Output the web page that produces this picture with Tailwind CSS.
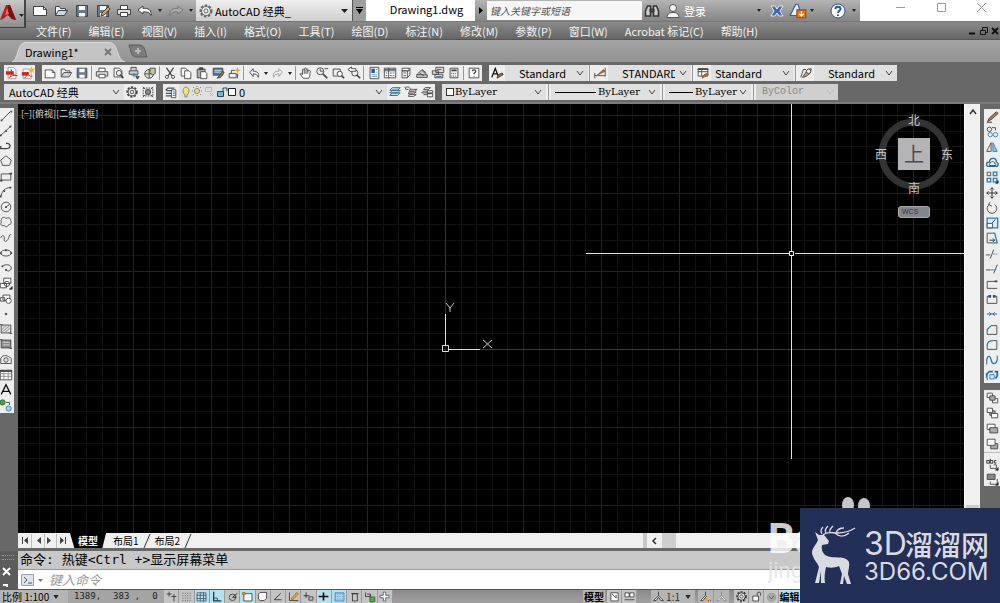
<!DOCTYPE html>
<html lang="zh-CN">
<head>
  <meta charset="UTF-8" />
  <meta name="viewport" content="width=device-width, initial-scale=1.0" />
  <title>Drawing1.dwg</title>
  <script src="https://cdn.jsdelivr.net/npm/@tailwindcss/browser@4"></script>
</head>
<body class="relative h-screen flex flex-col overflow-hidden bg-[#686868] font-['Noto_Sans_CJK_SC',sans-serif] text-[11px] leading-4 text-black">

  <!-- Title bar -->
  <header class="relative flex h-[22px] shrink-0 items-stretch bg-linear-to-b from-[#b4b4b4] to-[#858585] border-b border-[#777]">
    <button aria-label="应用程序" class="absolute left-0 top-0 z-10 flex h-7 w-[26px] items-center border-r-2 border-b border-[#444] bg-linear-to-b from-[#c8c8c8] to-[#8e8e8e]">
      <svg class="h-5 w-6" viewBox="0 0 24 20"><path d="M0 16L6 1h4l6 15-4-1-4-4-5 4z" fill="#b3201b"/><path d="M8 1h2l6 15-4-1-4-4z" fill="#7c100e"/><path d="M7 4l2 6-4 1z" fill="#e8695c"/><path d="M19 10h5l-2.500 3z" fill="#222"/></svg>
    </button>
    <div class="flex items-center pl-[29px] w-[196px] shrink-0 text-[#444]" data-tools="qnew qopen qsave qsaveas qprint qundo v qredo v" data-kind="quick"></div>
    <div class="flex w-[156px] shrink-0 items-center bg-linear-to-b from-[#efefef] to-[#cfcfcf] pl-[2px] pr-1">
      <svg class="size-4 shrink-0 text-[#666]" data-icon="gear"></svg>
      <select aria-label="工作空间" class="min-w-0 flex-1 appearance-none bg-transparent pl-px text-[11px] leading-5 outline-none"><option>AutoCAD 经典_</option></select>
      <svg class="h-1 w-[7px]" viewBox="0 0 7 4"><path d="M0 0h7L3.500 4z" fill="#222"/></svg>
    </div>
    <button aria-label="自定义" class="flex w-[14px] shrink-0 items-center justify-center border-l border-[#555] bg-[#9d9d9d]">
      <svg class="h-[7px] w-[7px]" viewBox="0 0 7 7"><path d="M0 0h7v1H0zM0 2h7L3.500 7z"/></svg>
    </button>
    <h1 class="flex h-[21px] w-[109px] shrink-0 justify-center bg-white pl-3 text-[11px] leading-[18px]">Drawing1.dwg</h1>
    <button aria-label="展开" class="flex w-3 shrink-0 items-center justify-center">
      <svg class="h-[7px] w-1" viewBox="0 0 4 7"><path d="M0 0v7l4-3.500z"/></svg>
    </button>
    <input aria-label="搜索" placeholder="键入关键字或短语" class="my-px w-[155px] shrink-0 bg-[#f6f6f6] pl-[3px] text-[10px] italic outline-none placeholder:text-[#555]" />
    <div class="flex flex-1 items-center pl-[2px]">
      <button aria-label="查找"><svg class="size-4 text-[#333]" data-icon="binoc"></svg></button>
      <button class="ml-[5px] flex items-center gap-[3px] text-white"><svg class="size-4 text-[#555]" data-icon="user"></svg>登录</button>
      <div class="ml-auto flex items-center pr-1">
        <svg class="mr-2 h-[3px] w-1" data-icon="tri"></svg>
        <button aria-label="Exchange"><svg class="size-4" data-icon="exch"></svg></button>
        <button aria-label="更新" class="ml-1"><svg class="size-[18px]" data-icon="a360"></svg></button>
        <svg class="ml-[3px] mr-4 h-[3px] w-1" data-icon="tri"></svg>
        <button aria-label="帮助"><svg class="size-4" data-icon="qhelp"></svg></button>
        <svg class="ml-[6px] h-[3px] w-1" data-icon="tri"></svg>
      </div>
    </div>
    <div class="flex h-[21px] w-[140px] shrink-0 items-start justify-between bg-white pl-9 pr-3 pt-[2px] text-[#999]">
      <button aria-label="最小化"><svg class="size-3" viewBox="0 0 12 12" stroke="currentColor"><path d="M0 5.500h9"/></svg></button>
      <button aria-label="最大化"><svg class="size-3" viewBox="0 0 12 12" fill="none" stroke="currentColor"><path d="M1.500 1.500h8v8h-8z"/></svg></button>
      <button aria-label="关闭"><svg class="size-3" viewBox="0 0 12 12" stroke="currentColor"><path d="M1 1l9 9M10 1l-9 9"/></svg></button>
    </div>
  </header>

  <!-- Menu bar -->
  <nav class="flex h-[18px] shrink-0 items-center gap-[17px] whitespace-nowrap border-b border-[#555] bg-linear-to-b from-[#8a8a8a] to-[#666] pl-9 text-[#f4f4f4]">
    <a href="#">文件(F)</a><a href="#">编辑(E)</a><a href="#">视图(V)</a><a href="#">插入(I)</a><a href="#">格式(O)</a><a href="#">工具(T)</a><a href="#">绘图(D)</a><a href="#">标注(N)</a><a href="#">修改(M)</a><a href="#">参数(P)</a><a href="#">窗口(W)</a><a href="#">Acrobat 标记(C)</a><a href="#">帮助(H)</a>
    <svg class="ml-auto h-3 w-8 shrink-0" viewBox="0 0 32 12" fill="none" stroke="#111"><path d="M1 8.500h6" stroke-width="2"/><path d="M12.500 5.500h5v4h-5zM14.500 5V2.500h5v5h-2"/><path d="M24 3l6 6M30 3l-6 6" stroke-width="2"/></svg>
  </nav>

  <!-- File tabs -->
  <div class="flex h-[22px] shrink-0 items-end bg-linear-to-b from-[#a3a3a3] to-[#939393] pl-3">
    <div class="relative flex h-5 w-[115px] items-center">
      <svg class="absolute inset-0 h-5 w-[115px]" viewBox="0 0 115 20"><path d="M0 20c6-1 5-19 13-19.500h85c8 0 7 18.500 15 19.500z" fill="#c4c4c4" stroke="#dadada"/></svg>
      <a href="#" class="relative pl-[13px]">Drawing1*</a>
      <button aria-label="关闭标签" class="relative ml-auto mr-[15px]"><svg class="size-2" viewBox="0 0 8 8" stroke="#777" stroke-width="2"><path d="M1 1l6 6M7 1L1 7"/></svg></button>
    </div>
    <button aria-label="新建标签" class="mb-1"><svg class="ml-px h-[14px] w-5" viewBox="0 0 20 14"><path d="M1 1h10c6 0 6 6 8 12H8C3 13 3 6 1 1z" fill="#7d7d7d" stroke="#5c5c5c"/><path d="M10 4v6M7 7h6" stroke="#bbb" stroke-width="2"/></svg></button>
  </div>

  <!-- Toolbars -->
  <div class="flex h-[42px] shrink-0 flex-col gap-[3px] border-b-2 border-[#7c7c7c] pl-1 pt-[3px] text-[#444]">
    <div class="flex h-4 shrink-0 gap-[7px]">
      <div class="flex w-[31px] bg-[#eee]" data-tools="pdf pdfstar"></div>
      <div class="flex bg-[#eee]" data-tools="new open save | print preview publish globe | cut copy paste match block | undo v redo v | pan zoomrt zoomwin zoomprev | props dcenter palettes sheet markup calc | help"></div>
      <div class="flex bg-[#eee]" data-combos="textstyle:Standard:14 dimstyle:STANDARD:14 tablestyle:Standard:4 leader:Standard:14"></div>
    </div>
    <div class="flex h-4 shrink-0 gap-[7px]">
      <div class="flex bg-[#eee]">
        <label class="flex w-[120px] items-center bg-[#e0e0e0] pr-1"><select aria-label="工作空间" class="min-w-0 flex-1 appearance-none pl-[5px] leading-4 text-black outline-none"><option>AutoCAD 经典</option></select><svg class="size-2" data-icon="chev"></svg></label>
        <div class="flex" data-tools="gear wsset"></div>
      </div>
      <div class="flex bg-[#eee]">
        <div class="flex" data-tools="layers"></div>
        <label class="flex w-[208px] items-center bg-[#e0e0e0] pr-1">
          <svg class="h-4 w-[58px] shrink-0" data-icon="layerstate"></svg>
          <select aria-label="图层" class="min-w-0 flex-1 appearance-none pl-[2px] leading-4 text-black outline-none"><option>0</option></select><svg class="size-2" data-icon="chev"></svg>
        </label>
        <div class="flex" data-tools="laycur layprev laystate"></div>
      </div>
      <div class="flex bg-[#eee] font-['DejaVu_Serif',serif] text-[10px]">
        <label class="flex w-[104px] items-center bg-[#e0e0e0] pl-1 pr-1"><span class="size-2 border border-[#333] bg-white"></span><select aria-label="颜色" class="min-w-0 flex-1 appearance-none pl-px leading-4 text-black outline-none"><option>ByLayer</option></select><svg class="size-2" data-icon="chev"></svg></label>
        <span class="mx-[2px] w-px bg-[#999]"></span>
        <label class="flex w-[109px] items-center bg-[#e0e0e0] pl-1 pr-1"><span class="h-px w-[41px] bg-black"></span><select aria-label="线型" class="min-w-0 flex-1 appearance-none pl-[2px] leading-4 text-black outline-none"><option>ByLayer</option></select><svg class="size-2" data-icon="chev"></svg></label>
        <span class="mx-[2px] w-px bg-[#999]"></span>
        <label class="flex w-[86px] items-center bg-[#e0e0e0] pl-1 pr-1"><span class="h-px w-6 bg-black"></span><select aria-label="线宽" class="min-w-0 flex-1 appearance-none pl-[2px] leading-4 text-black outline-none"><option>ByLayer</option></select><svg class="size-2" data-icon="chev"></svg></label>
        <span class="mx-[2px] w-px bg-[#999]"></span>
        <label class="flex w-[82px] items-center bg-[#cfcfcf] pr-1 font-['Liberation_Mono',monospace] text-[#888]"><select disabled aria-label="打印样式" class="min-w-0 flex-1 appearance-none pl-[6px] leading-4 outline-none"><option>ByColor</option></select><svg class="size-2 text-[#bbb]" data-icon="chev"></svg></label>
      </div>
    </div>
  </div>

  <!-- Workspace -->
  <main class="flex min-h-0 flex-1">
    <aside class="flex w-[14px] shrink-0 justify-end overflow-hidden pt-1 text-[#444]">
      <div class="flex h-[305px] w-4 shrink-0 flex-col bg-[#eee]" data-kind="side" data-tools="line xline pline polygon rect arc circle revcloud spline ellipse elarc insert mkblock point hatch gradient region table mtext addsel"></div>
    </aside>
    <div class="ml-1 flex min-w-0 flex-1 flex-col">
      <div class="flex min-h-0 flex-1">
        <!-- Model space -->
        <div class="relative min-w-0 flex-1 overflow-hidden bg-black">
          <svg class="absolute inset-0 h-full w-full">
            <defs>
              <pattern id="grid" width="78" height="78" x="427" y="245" patternUnits="userSpaceOnUse">
                <path d="M16.500 0v78M31.500 0v78M47.500 0v78M62.500 0v78M0 16.500h78M0 31.500h78M0 47.500h78M0 62.500h78" stroke="#101113"/>
                <path d="M.5 0v78M0 .5h78" stroke="#212427"/>
              </pattern>
            </defs>
            <rect width="100%" height="100%" fill="url(#grid)"/>
            <path d="M427.500 0v210" stroke="#1f4423"/>
            <path d="M462 245.500h2000" stroke="#6a2424"/>
            <path d="M427.500 210v32M431 245.500h31" stroke="#ddd"/>
            <path d="M424.500 241.500h6v6h-6z" fill="none" stroke="#ddd"/>
            <path d="M428 199l4 5 4-5M432 204v4M465 236l9 8M474 236l-9 8" fill="none" stroke="#ccc"/>
            <path d="M568 149.500h203M777 149.500h2000M773.500 0v147M773.500 152v203" stroke="#e4e4e4"/>
            <path d="M771.500 147.500h4v4h-4z" fill="none" stroke="#fff"/>
          </svg>
          <p class="relative pl-[3px] pt-[2px] text-[9px] leading-4 text-[#ddd]">[−][俯视][二维线框]</p>
          <!-- View cube -->
          <div class="absolute right-[10px] top-2 grid w-20 grid-cols-[14px_1fr_14px] items-center justify-items-center text-[12px] leading-4 text-[#c4c4c4]">
            <svg class="absolute left-1 top-[6px] size-[72px]" viewBox="0 0 72 72"><circle cx="36" cy="36" r="32" fill="none" stroke="#333" stroke-width="7"/></svg>
            <a href="#" class="relative col-span-3">北</a>
            <a href="#" class="relative">西</a>
            <a href="#" class="relative my-[10px] flex size-8 items-center justify-center bg-[#b4b4b6] text-[20px] leading-8 text-[#4b4b50]">上</a>
            <a href="#" class="relative">东</a>
            <a href="#" class="relative col-span-3">南</a>
            <button class="col-span-3 mt-[10px] flex h-3 w-8 items-center rounded-[3px] border border-[#aaa] bg-[#85858f] pl-[3px] font-['Liberation_Sans',sans-serif] text-[7px] leading-3 text-[#333]">WCS</button>
          </div>
          <svg class="absolute bottom-5 right-[93px] h-4 w-[31px]" viewBox="0 0 31 16" fill="#c6c6c6"><ellipse cx="8" cy="8" rx="6" ry="8"/><ellipse cx="24" cy="9" rx="6" ry="8"/></svg>
        </div>
        <div class="flex w-4 shrink-0 flex-col items-center justify-between border-l border-white bg-[#f0f0f0] pt-1">
          <svg class="size-2" viewBox="0 0 8 8" fill="none" stroke="#333" stroke-width="1.500"><path d="M1 6l3-4 3 4"/></svg>
          <span class="h-7 w-[13px] bg-[#cdcdcd]"></span>
        </div>
      </div>
      <!-- Layout tabs -->
      <div class="flex h-[15px] shrink-0 items-center bg-[#f0f0f0] text-[10px] leading-[14px]">
        <svg class="h-[14px] w-[52px] shrink-0" viewBox="0 0 52 14" fill="#444" stroke="#bbb"><path d="M13.500 0v14M26.500 0v14M38.500 0v14"/><g stroke="none"><path d="M4 3h1v7H4zM10 3v7L6 6.500zM23 3v7l-4-3.500zM29 3v7l4-3.500zM42 3v7l4-3.500zM47 3h1v7h-1z"/></g></svg>
        <a href="#" class="flex h-[15px] w-9 items-center justify-center bg-black font-bold text-white [clip-path:polygon(0_0,100%_0,90%_100%,12%_100%)]">模型</a>
        <a href="#" class="pl-[7px]">布局1</a>
        <svg class="mx-1 h-[14px] w-2" viewBox="0 0 8 14"><path d="M1 14L7 0" stroke="#333"/></svg>
        <a href="#">布局2</a>
        <svg class="mx-1 h-[14px] w-2" viewBox="0 0 8 14"><path d="M1 14L7 0" stroke="#333"/></svg>
        <div class="ml-auto flex h-full w-[337px] items-center border-l-4 border-[#c8c8c8]">
          <svg class="ml-1 size-2" viewBox="0 0 8 8" fill="none" stroke="#333" stroke-width="1.500"><path d="M5 1L2 4l3 3"/></svg>
          <span class="ml-[3px] h-full w-[14px] bg-[#cdcdcd]"></span>
        </div>
      </div>
    </div>
    <aside class="ml-1 w-4 shrink-0 overflow-hidden pt-[5px] text-[#444]">
      <div class="flex h-[274px] flex-col bg-[#eee]" data-kind="side" data-tools="erase mcopy mirror offset array move rotate scale stretch trim extend breakpt break join chamfer fillet blend explode"></div>
      <div class="mt-[7px] flex h-[62px] flex-col bg-[#eee]" data-kind="side" data-tools="front back above under"></div>
      <div class="flex h-[34px] flex-col border-t border-[#bbb] bg-[#eee] pt-[3px]" data-kind="side" data-tools="txtfront hatchback"></div>
    </aside>
  </main>

  <!-- Command line -->
  <section class="mt-[3px] flex h-[38px] shrink-0">
    <div class="flex w-[18px] shrink-0 flex-col items-start justify-between bg-[#5c5c5c] pb-[2px] pl-[2px] pt-1">
      <span class="h-[5px] w-3 border-y border-dotted border-[#999]"></span>
      <button aria-label="关闭命令行"><svg class="size-[9px]" viewBox="0 0 9 9" stroke="#fff" stroke-width="2"><path d="M1 1l7 7M8 1L1 8"/></svg></button>
      <svg class="h-1 w-2" viewBox="0 0 8 4" stroke="#fff" fill="none" stroke-width="2"><path d="M1 2h4v3"/></svg>
    </div>
    <div class="flex min-w-0 flex-1 flex-col bg-white">
      <p class="h-[19px] border-b border-[#999] bg-[#c8c8c8] pl-[2px] font-['DejaVu_Sans_Mono','Noto_Sans_CJK_SC',monospace] text-[13px] leading-[17px]">命令: 热键&lt;Ctrl +&gt;显示屏幕菜单</p>
      <label class="flex flex-1 items-center pl-[3px]">
        <svg class="h-3 w-[22px]" viewBox="0 0 22 12"><path d="M.5.5h12v11H.5z" fill="#dde3ea" stroke="#9aa4b0"/><path d="M3 3l3 3-3 3M7 9h4" fill="none" stroke="#456"/><path d="M17 5h5l-2.500 3z" fill="#777"/></svg>
        <input aria-label="命令" placeholder="键入命令" class="min-w-0 flex-1 pl-[6px] text-[13px] italic leading-4 outline-none placeholder:text-[#999]" />
      </label>
    </div>
  </section>

  <!-- Status bar -->
  <footer class="flex h-[14px] shrink-0 items-stretch border-t border-[#555] bg-linear-to-b from-[#8b8b8b] to-[#a0a0a0] text-[10px] leading-[13px] text-[#333]">
    <button class="flex w-[68px] shrink-0 items-center gap-1 bg-[#b5b5b5] pl-[2px] text-black">比例 1:100<svg class="h-1 w-[6px]" data-icon="tri"></svg></button>
    <p class="flex w-[96px] shrink-0 gap-[12px] bg-[#a4a4a4] pl-[6px] font-['DejaVu_Sans_Mono',monospace] text-[9px] text-[#222]"><span>1389,</span><span>383 ,</span><span>0</span></p>
    <div class="flex w-[229px] shrink-0 bg-[#c4c4c4]" data-kind="status" data-tools="infer snap grid* ortho* polar osnap* osnap3d otrack ducs dyn lwt* tpy* qp sc plus"></div>
    <div class="ml-auto flex items-stretch pr-[200px]">
      <button class="mr-[2px] bg-[#b5b5b5] px-px font-bold text-black">模型</button>
      <div class="flex w-[30px] bg-[#c4c4c4]" data-kind="status" data-tools="layout1 layout2"></div>
      <button class="ml-[14px] flex items-center gap-px bg-[#b5b5b5] pl-px"><svg class="size-[13px] text-[#333]" data-icon="anno"></svg>1:1<svg class="mx-1 h-1 w-[6px]" data-icon="tri"></svg></button>
      <div class="ml-[3px] flex w-8 bg-[#b5b5b5]" data-kind="status" data-tools="annovis annoauto"></div>
      <div class="ml-1 flex w-[45px] bg-[#c4c4c4]" data-kind="status" data-tools="gear lock perf"></div>
      <span class="flex w-[21px] justify-center bg-[#b5e0ee] font-bold text-black">编辑</span>
    </div>
  </footer>

  <!-- Watermarks -->
  <div class="pointer-events-none absolute bottom-0 right-[200px] h-[95px] w-8 overflow-hidden font-['Roboto',sans-serif]">
    <p class="pt-[10px] text-[42px] font-bold leading-[41px] text-white/80">Ba</p>
    <p class="text-[22px] leading-6 text-[#e4e4e4]/90">jingyan</p>
  </div>
  <div class="absolute bottom-0 right-0 flex h-[95px] w-[200px] items-start gap-2 bg-[#222f56] pl-[10px] pt-[17px] text-[#d9dbe0]">
    <svg class="h-[60px] w-[46px] shrink-0" viewBox="0 0 46 60"><path d="M5 7l4 3 5 0c2 2 3 4 5 6l-1 3-6 1c-1 5 1 9 5 11 7 3 18-1 22 6 1 4-1 8-1 12l3 10h-4l-3-8-1 8h-3l2-10-3-8c-4 2-9 2-13 1-1 5-2 10-1 16h-4l0-12-2 12H5l4-16C7 37 3 34 2 28c0-5 4-8 6-13z" fill="currentColor"/><path d="M13 10c4-4 9-2 14-2 6 0 12-1 18-5M25 8c4 4 9 4 14 0M12 9c-2-3-1-5 1-7M16 8c-2-3 0-5 2-7M20 7c-1-2 1-4 3-6M26 8c1-3 4-5 8-5" fill="none" stroke="currentColor" stroke-width="1.300"/></svg>
    <div class="pt-[3px]">
      <p class="flex items-center text-[28px] font-medium leading-8"><span class="w-[41px] font-['Inter',sans-serif] text-[32px] font-normal">3D</span>溜溜网</p>
      <p class="font-['Inter',sans-serif] text-[24px] leading-6">3D66.COM</p>
    </div>
  </div>

  <script>
    const page = '<path d="M2.500 4.500h8l3 3v6h-11z" fill="#fff"/><path d="M10.500 4.500v3h3"/>';
    const disk = '<path d="M2.500 2.500h11v11h-11z" fill="#69788c"/><path d="M5 3h6v4H5zM5 10h6v3.500H5z" fill="#fff" stroke="none"/>';
    const folder = '<path d="M2.500 12.500v-9h4l1 2h5v2" fill="#eee"/><path d="M2.500 12.500l3-5h9l-3 5z" fill="#cfd6de"/>';
    const printer = '<path d="M4.500 6V2.500h7V6" fill="#fff"/><path d="M1.500 6.500h13v5h-13z" fill="#ddd"/><path d="M4.500 9.500h7v4h-7z" fill="#fff"/>';
    const lens = '<circle cx="6" cy="6" r="4"/><path d="M9 9l5 5" stroke-width="2"/>';
    const person = '<path d="M8 2v5l-6 6h3l3-4 3 4h3L8 7" fill="#eee"/>';
    const pencil = '<path d="M6 13l1-3 6-6 2 2-6 6z" fill="#e6a33a"/>';
    const icons = {
      qnew: '<path d="M1.500 3.500h10l3 3v6h-13z" fill="#fff"/><path d="M11.500 3.500v3h3"/>',
      qopen: folder, qsave: disk, qsaveas: disk + pencil, qprint: printer,
      qundo: '<path d="M1 7l5-4v2.500c5-1 9 2 8 7-1-3-4-4-8-3.500V11z" fill="#fff"/>',
      qredo: '<path d="M15 7l-5-4v2.500c-5-1-9 2-8 7 1-3 4-4 8-3.500V11z" fill="#aaa" stroke="#777"/>',
      new: page, open: folder, save: disk, print: printer,
      gear: '<circle cx="8" cy="8" r="5.500" stroke-dasharray="2.500 1.500" stroke-width="2"/><circle cx="8" cy="8" r="4.500" fill="#eee"/><circle cx="8" cy="8" r="2"/>',
      binoc: '<path d="M1.500 13V8l2-5h3v10zM14.500 13V8l-2-5h-3v10z" fill="#ccc" stroke-width="1.500"/><path d="M6 6h4v3H6z" fill="#444"/>',
      user: '<circle cx="8" cy="5" r="3.500" fill="#f4f4f4"/><path d="M2 14.500c0-4 3-5 6-5s6 1 6 5z" fill="#f4f4f4"/>',
      exch: '<path d="M2 3h4l2 3 2-3h4l-3 5 3 5h-4l-2-3-2 3H2l3-5z" fill="#4169b0" stroke="#dfe8f6"/>',
      a360: '<path d="M1 12L6 2h2l3 10z" fill="#eee" stroke="#2d5f9e"/><path d="M7 7h8v7H7z" fill="#e07b1e" stroke="#9c4c09"/><path d="M11 8v4M9 10.500l2 2 2-2" stroke="#fff"/>',
      qhelp: '<circle cx="8" cy="8" r="7" fill="#fff" stroke="#2f4f8f"/><path d="M5.500 6c0-3 5-3 5 0 0 2-2.500 1.500-2.500 4M8 11.500v1.500" stroke="#2454a8" stroke-width="2"/>',
      pdf: '<path d="M3.500 1.500h6l3 3v10h-9z" fill="#fff" stroke="#999"/><path d="M1 6h9v4H1z" fill="#d02020" stroke="none"/><path d="M5 13c3-3 3-6 2-9 1 5 3 7 7 7-4-1-6 0-9 2" stroke="#d02020"/>',
      pdfstar: '<path d="M2.500 3.500h6l3 3v8h-9z" fill="#fff" stroke="#999"/><path d="M1 7h8v4H1z" fill="#d02020" stroke="none"/><path d="M4 14c3-3 4-5 3-7 1 3 3 5 6 5" stroke="#d02020"/><path d="M12 0l1 3 3 0-2 2 1 3-3-2-3 2 1-3-2-2h3z" fill="#f2b632" stroke="none"/>',
      preview: '<path d="M3.500 2.500h6l3 3v7h-9z" fill="#fff"/><circle cx="9" cy="8" r="3" fill="#eee"/><path d="M11 10l3 4" stroke-width="2"/>',
      publish: '<path d="M4.500 5V1.500h6V5M2.500 5.500h10v4h-10z" fill="#ccd"/><path d="M5.500 10.500h7M8 8v5" stroke="#2b7fb8"/><path d="M10 12l4 0-2 3z" fill="#2b7fb8"/>',
      globe: '<circle cx="7" cy="9" r="5" fill="#dde4c8"/><path d="M7 4v10M2 9h10"/><path d="M8 2.500h6v6l-3 2-3-3z" fill="#c2c996"/>',
      cut: '<path d="M4 2l6 9M12 2L6 11" stroke-width="1.500"/><circle cx="4.500" cy="12.500" r="1.800"/><circle cx="11.500" cy="12.500" r="1.800"/>',
      copy: '<path d="M2.500 2.500h5l2 2v7h-7z" fill="#fff"/><path d="M6.500 5.500h5l2 2v7h-7z" fill="#fff"/>',
      paste: '<path d="M2.500 3.500h9v10h-9z" fill="#aaa"/><path d="M5 2h4v2H5z" fill="#444"/><path d="M6.500 6.500h5l2 2v6h-7z" fill="#fff"/>',
      match: '<path d="M2.500 2.500h11v8h-11z" fill="#4b7fae"/><path d="M4 5h8M4 7h8" stroke="#dbe8f4"/><path d="M7 14l3-4 3-4 2 1-4 6z" fill="#b36a33"/>',
      block: '<path d="M2.500 8.500h8v5h-8zM5 8V5h4"/><path d="M12 1l1 3 3 1-3 1-1 3-1-3-3-1 3-1z" fill="#e8a92e" stroke="none"/><path d="M12 9v5"/>',
      undo: '<path d="M3 7l4-4v3c5 0 7 2 6 7-1-3-3-4-6-4v3z"/>',
      redo: '<path d="M13 7L9 3v3c-5 0-7 2-6 7 1-3 3-4 6-4v3z" stroke="#999"/>',
      pan: '<path d="M5 14l-4-5c1-1 2 0 3 1V4c1-1 2 0 2 1V3c1-1 2-1 2 0v1c1-1 2-1 2 0v2c1-1 3-1 3 0-1 3 0 6-2 8z" fill="#fff"/><path d="M6 5v4M8 4v5M10 5v4"/>',
      zoomrt: lens + '<path d="M6 3v3h3M11 3h4"/>',
      zoomwin: '<path d="M2.500 3.500h8v8h-8z"/><circle cx="10" cy="9" r="3" fill="#fff"/><path d="M12 11l3 3" stroke-width="2"/>',
      zoomprev: '<circle cx="9" cy="8" r="3.500"/><path d="M11 10l4 4" stroke-width="2"/><path d="M1 4l4-3v2h5v3H5v1z" fill="#fff"/>',
      props: '<path d="M3.500 1.500h10v13h-10z" fill="#fff"/><path d="M5 3h4v5H5z" fill="#245a94" stroke="none"/><path d="M10 4h2M10 7h2M5 10h7M5 12h7" stroke="#69c"/>',
      dcenter: '<path d="M1.500 2.500h13v11h-13zM6.500 2v12M1 5.500h13" fill="#fff"/><path d="M2 4h12M8 8h2M11 8h2M8 11h2M11 11h2M3 8h2M3 11h2" stroke="#245a94"/>',
      palettes: '<path d="M3.500 2.500h8v3h-8zM3.500 5.500h6v8h-6z" fill="#fff"/><path d="M12.500 2v8l-3 3.500M5 8h3M5 11h3"/>',
      sheet: '<path d="M2 10l6-6 5 4M2 10h12v3H2z" fill="#ccc"/><path d="M5 8l5 3M8 5l5 5"/>',
      markup: '<path d="M5.500 1.500h9v6h-9zM1.500 5.500h7v4h-7zM4.500 9.500h9v4h-9z" fill="#ddd"/><path d="M7 4h5M6 12h6" stroke="#245a94"/>',
      calc: '<path d="M3.500 2.500h9v11h-9z" fill="#eee"/><path d="M5 5h6" stroke-width="2"/><path d="M5 8.500h6M5 11.500h6" stroke-dasharray="1 1"/>',
      help: '<path d="M2.500 2.500h11v11h-11z" fill="#fff"/><path d="M6 6c0-2 4-2 4 0S8 7 8 9.500M8 11v1" stroke-width="1.500"/>',
      textstyle: '<path d="M2 13L6 3l4 10M3.500 9h5" stroke="#111" stroke-width="1.500"/><path d="M8 14l1-4 5-2 1 2z" fill="#a5623a"/>',
      dimstyle: '<path d="M2 11h12M2 8v6M14 2v10"/><path d="M4 11l8-7 2 2z" fill="#a5623a" stroke="#a5623a"/>',
      tablestyle: '<path d="M2.500 3.500h11v8h-11zM2 6.500h12M6.500 4v8" fill="#fff"/><path d="M2 3.500h12" stroke-width="2"/><path d="M7 14l2-4 4-2 1 2z" fill="#a5623a" stroke="#a5623a"/>',
      leader: '<path d="M2 13l3-9h3" /><path d="M4 13l6-9 4-1-1 5-5 4z" fill="#c79c7a"/><circle cx="11" cy="6" r="2.500" fill="#eee"/>',
      wsset: '<path d="M2.500 3.500h11v9h-11z" stroke-dasharray="2 1"/><circle cx="8" cy="8" r="3" fill="#888"/><path d="M2 2l3 3M14 2l-3 3M2 14l3-3M14 14l-3-3"/>',
      layers: '<path d="M5 3.500h7M3 6.500h6M2 9.500h6M2 12.500h6M5 3L2 6" stroke="#456" stroke-width="1.500"/><path d="M8.500 5.500h5v9h-5z" fill="#fff"/><path d="M10 8h3M10 10h3M10 12h3" stroke="#2b7fb8"/>',
      laycur: '<path d="M5 3h9l-3 3H2zM5 6h9l-3 3H2zM5 9h9l-3 3H2z" fill="#b8dbe6" stroke="#256d88"/>',
      layprev: '<path d="M7 5h8l-3 2H6zM6 8h8l-3 2H5zM6 11h8l-3 2H5z" fill="#fff"/><path d="M2 3c3-2 5 0 5 2M1 2l1 3h3"/>',
      laystate: '<path d="M6 3h6l-2 2H4zM4 7h6l-2 2H2zM4 11h6"/><path d="M8.500 6.500h6v7h-6z" fill="#fff"/><path d="M8 9.500h6" stroke-width="2"/>',
      line: '<path d="M3 13L13 3"/><path d="M2 13h2M13 3h2" stroke-width="2"/>',
      xline: '<path d="M1 14L14 2"/><path d="M1 13h2M7 8h2M12 3h2" stroke-width="2"/>',
      pline: '<path d="M1 11h7c6 0 6-6 1-6M2 8v3M8 5h2" stroke-width="1.500"/>',
      polygon: '<path d="M8 2l6 5-2 6H4L2 7z"/>',
      rect: '<path d="M2.500 4.500h11v7h-11z"/><path d="M1 12h3M12 4h3" stroke-width="2"/>',
      arc: '<path d="M2 14c1-7 5-11 11-11"/><path d="M1 13h2M5 7h2M12 3h2" stroke-width="2"/>',
      circle: '<circle cx="8" cy="8" r="5.500"/><path d="M8 8l4-3"/><path d="M7 8h2" stroke-width="2"/>',
      revcloud: '<path d="M3 5c0-3 4-3 5-1 3-2 6 0 5 2 2 2 1 5-2 5-1 3-4 3-5 1-4 1-5-2-3-4-1-1-1-2 0-3z"/>',
      spline: '<path d="M2 8c2-5 5-2 4 1s2 4 4 1 1-6 4-6"/>',
      ellipse: '<ellipse cx="8" cy="8" rx="6" ry="3.500"/><path d="M1 8h2M13 8h2M7 5h2" stroke-width="2"/>',
      elarc: '<path d="M4 6c3-3 10-2 10 2s-5 4-6 2"/><path d="M3 6h2M7 10h2" stroke-width="2"/>',
      insert: '<path d="M5.500 2.500h8v6h-8zM1.500 8.500h7v5h-7z" fill="#fff"/><circle cx="9" cy="9" r="3"/><path d="M12 15h3v-3z" fill="#000"/>',
      mkblock: '<path d="M4.500 3.500h8v6h-8zM1.500 6.500h5v4h-5z" fill="#fff"/><circle cx="11" cy="10" r="3" fill="#fff"/>',
      point: '<circle cx="8" cy="8" r="1" fill="#444"/>',
      hatch: '<path d="M2.500 3.500h11v9h-11z" fill="#ddd"/><path d="M3 9l5-5M3 12l9-8M7 12l6-6" stroke="#888"/><path d="M1 3h3M12 13h3"/>',
      gradient: '<path d="M2.500 3.500h11v9h-11z" fill="#888"/><path d="M4 6h8M4 9h8" stroke="#ddd"/><path d="M1 3h3M12 13h3"/>',
      region: '<path d="M2 12V6c3-5 8-3 12 0v6z"/><circle cx="8" cy="8" r="2.500"/>',
      table: '<path d="M1.500 2.500h13v11h-13z" fill="#fff"/><path d="M1 6.500h13M1 9.500h13M5.500 5v8M10.500 5v8" stroke="#888"/><path d="M1 3.500h14" stroke-width="2"/>',
      mtext: '<path d="M2.500 13L8 2l5.500 11M4 9.500h8" stroke="#111" stroke-width="1.500"/>',
      addsel: '<circle cx="4" cy="5" r="3" fill="#4da04d" stroke="#2b6b2b"/><circle cx="11" cy="12" r="3" fill="#a8d0f0" stroke="#2b7fb8"/><path d="M8 5h4v3"/>',
      erase: '<path d="M3 13l2-4 8-7 2 2-8 7z" fill="#b87842"/><path d="M2 14h6" stroke="#222"/>',
      mcopy: '<circle cx="5" cy="5" r="2.500"/><circle cx="6" cy="11" r="2.500" stroke="#2b7fb8"/><circle cx="12" cy="11" r="2.500" stroke="#2b7fb8"/><path d="M8 3h4v3"/>',
      mirror: '<path d="M7 3v10H2z"/><path d="M9 3v10h5z" fill="#8ec3e6" stroke="#2b7fb8"/>',
      offset: '<path d="M2 12c-1-3 1-4 3-4 1-6 8-5 8 0 3 1 2 4 1 5H3z" stroke="#1d6d9e" stroke-width="1.500"/><path d="M5 11c1-4 6-5 6-1 2 0 2 1 1 2H5z"/>',
      array: '<path d="M2.500 2.500h4v4h-4z"/><path d="M9.500 2.500h4v4h-4zM2.500 9.500h4v4h-4zM9.500 9.500h4v4h-4z" stroke="#2b7fb8" stroke-width="1.500"/><path d="M12 15h3v-3z" fill="#000"/>',
      move: '<path d="M8 2v12M2 8h12M6 4l2-2 2 2M6 12l2 2 2-2M4 6L2 8l2 2M12 6l2 2-2 2" stroke="#222"/>',
      rotate: '<path d="M5 4a5.500 5.500 0 1 0 6 0M6 1L4 4l4 2"/>',
      scale: '<path d="M2.500 2.500h12v11h-12z" fill="#d6ebf6" stroke="#2b7fb8" stroke-width="1.500"/><path d="M2.500 8.500h6v5h-6z" fill="#fff"/><path d="M8 8l4-4"/>',
      stretch: '<path d="M9 2.500H2.500v11H7"/><path d="M9 2.500h2l3 11H7" stroke="#2b7fb8" stroke-width="1.500"/><path d="M5 10.500h6M9 8.500l2 2-2 2" stroke="#222"/>',
      trim: '<path d="M1 9h5M6 13l4-10"/><path d="M9 8h6" stroke="#2b7fb8" stroke-dasharray="2 1"/>',
      extend: '<path d="M1 9h5M10 13l4-10"/><path d="M6 9h6" stroke="#2b7fb8"/>',
      breakpt: '<path d="M14 5H2.500v8H14"/><path d="M11 5h3" stroke-width="2"/>',
      break: '<path d="M5 5H2.500v8h11V5H11"/><path d="M4 5h3M9 5h3" stroke="#1d5e8c" stroke-width="3"/>',
      join: '<path d="M2 8h12M5 6l2 2-2 2M11 6L9 8l2 2" stroke="#1d5e8c"/>',
      chamfer: '<path d="M7 3h6.500v10h-11V8"/><path d="M2 8l5-5" stroke="#2b7fb8" stroke-width="1.500"/>',
      fillet: '<path d="M9 3h4.500v10h-11V9"/><path d="M2.500 9c0-4 3-6 6.500-6" stroke="#2b7fb8" stroke-width="1.500"/>',
      blend: '<path d="M2 13V8M14 8V3"/><path d="M2 8c1-6 4-5 5 0s5 6 7 0" stroke="#2b7fb8" stroke-width="1.500"/>',
      explode: '<path d="M5.500 7.500h5v5h-5z" fill="#cfe7f5" stroke="#2b7fb8"/><path d="M2 11V7l3-3h4M11 4h3v5l-2 3M3 12l-1 1" stroke="#1d6d9e" stroke-width="2"/>',
      front: '<path d="M2.500 2.500h6v5h-6zM8.500 8.500h6v5h-6z" fill="#fff"/><path d="M5.500 5.500h6v5h-6z" fill="#aaa"/>',
      back: '<path d="M5.500 5.500h6v5h-6z" fill="#aaa"/><path d="M2.500 2.500h6v5h-6zM7.500 8.500h7v5h-7z" fill="#fff"/>',
      above: '<path d="M2.500 2.500h9v6h-9z" fill="#fff"/><path d="M5.500 6.500h9v6h-9z" fill="#aaa"/>',
      under: '<path d="M6.500 7.500h8v6h-8z" fill="#aaa"/><path d="M2.500 2.500h9v7h-9z" fill="#fff"/>',
      txtfront: '<path d="M2 4h3v3H2zM6 2v5h3V4H6M13 4h-2v3h2" stroke="#222"/><path d="M6 9v4h7V9h-3"/><path d="M12 15h3v-3z" fill="#000"/>',
      hatchback: '<path d="M2.500 2.500h9v6h-9z" fill="#888"/><path d="M6 11v3h8V8"/><path d="M12 15h3v-3z" fill="#000"/>',
      infer: '<path d="M2 5h6M5 2v6M8 8h6M11 5v9"/>',
      snap: '<path d="M3 4h10M3 7h10M3 10h10M3 13h10" stroke-dasharray="1 2"/>',
      grid: '<path d="M2.500 3.500h11v10h-11zM2 6.500h12M2 10.500h12M6.500 3v11M10.500 3v11" stroke="#456"/>',
      ortho: '<path d="M4.500 2v11.500H14" stroke="#235" stroke-width="1.500"/><path d="M5 10h4v4" />',
      polar: '<circle cx="8" cy="9" r="4"/><path d="M8 9l6-5M8 9h5" stroke="#222"/>',
      osnap: '<path d="M3.500 4.500h10v9h-10z" fill="#fff"/><path d="M2 3h3v3H2z" fill="#e2a03a" stroke="#a66a12"/>',
      osnap3d: '<path d="M5 3h8v7l-3 3H3V5z" fill="#fff"/><path d="M2 11h3v3H2z" fill="#e2a03a" stroke="none"/>',
      otrack: '<path d="M12 4l-8 8h9" stroke="#222"/>',
      ducs: '<path d="M3 3v10h11"/><path d="M5 11l7-8 2 2-7 7z" fill="#e6a33a" stroke="#a66a12"/>',
      dyn: '<path d="M2 7h7M5 3v7" stroke="#222"/><path d="M8.500 8.500h5v4h-5z"/>',
      lwt: '<path d="M2 8h12M8 3v10" stroke="#111" stroke-width="2"/>',
      tpy: '<path d="M2.500 3.500h11v10h-11z" fill="#b8d7ec" stroke="#2b7fb8"/><path d="M3 5h10M3 8h10M3 11h10" stroke="#2b7fb8" stroke-dasharray="1 1"/>',
      qp: '<path d="M5.500 4.500h6v9h-6z"/><path d="M4 4.500h9" stroke="#222"/>',
      sc: '<path d="M3 3v5h6V5M5 5h4v6"/><path d="M8.500 8.500h6v6h-6z" fill="#58a650" stroke="#2b6b2b"/>',
      plus: '<path d="M6.500 2.500h3v4h4v3h-4v4h-3v-4h-4v-3h4z" fill="#fff" stroke="#456"/>',
      layout1: '<path d="M3.500 3.500h9v10h-9z" fill="#fff"/><path d="M5 5l5 5M10 6v4"/>',
      layout2: '<path d="M2.500 3.500h5v5h-5zM8.500 3.500h5v5h-5z" fill="#fff"/><path d="M2 12h12"/>',
      anno: person, annovis: person + '<path d="M11 6l1 3h3l-2 2 1 3-3-2-2 2V9z" fill="#f0b93a" stroke="none"/>',
      annoauto: '<g stroke="#888">' + person + '</g>',
      lock: '<path d="M3.500 7.500h7v6h-7z" fill="#fff"/><path d="M9 7V4c0-2 4-2 4 0v3"/>',
      perf: '<circle cx="8" cy="9" r="5" fill="#aaa" stroke="#999"/><path d="M5 8l3 3 3-4" stroke="#345"/>',
    };
    const others = {
      tri: ["0 0 4 3", '<path d="M0 0h4L2 3z" fill="#222" stroke="none"/>'],
      chev: ["0 0 8 8", '<path d="M1 2l3 4 3-4"/>'],
      layerstate: ["0 0 58 16", '<path d="M6 11c-4-4-1-8 1-8s5 4 1 8v2H6z" fill="#f7e27a" stroke="#887"/><circle cx="18" cy="7" r="2.500" fill="#f7e27a" stroke="#887"/><path d="M18 2v1M18 11v1M13 7h1M22 7h1M14 3l1 1M22 3l-1 1M14 11l1-1M22 11l-1-1" stroke="#887"/><path d="M26.500 3.500h6v4h-6zM31 9l3 3M34 9l-3 3" stroke="#bbb"/><path d="M38.500 7.500h6v5h-6z" fill="#76b6dc" stroke="#246"/><path d="M44 7V4h4v3" stroke="#246"/><path d="M49.500 4.500h7v7h-7z" fill="#fff" stroke="#222"/>'],
    };

    function fillIcon(svg, name) {
      const [box, body] = others[name] || ["0 0 16 16", icons[name]];
      svg.setAttribute("viewBox", box);
      svg.setAttribute("fill", "none");
      svg.setAttribute("stroke", "currentColor");
      svg.innerHTML = body;
    }

    const kinds = {
      quick: "w-[21px] flex justify-center shrink-0",
      side: "w-4 flex-1 min-h-0 flex items-center justify-center shrink-0",
      status: "flex-1 flex items-center justify-center border-r border-[#999]",
      bar: "w-4 h-4 flex items-center justify-center shrink-0",
    };
    const sizes = { quick: "size-4", side: "size-[14px]", status: "size-[13px]", bar: "size-[14px]" };

    document.querySelectorAll("[data-tools]").forEach((bar) => {
      const kind = bar.dataset.kind || "bar";
      bar.innerHTML = bar.dataset.tools.split(" ").map((item) => {
        if (item === "|") return '<span class="ml-px mr-[2px] my-px w-px shrink-0 bg-[#999]"></span>';
        if (item === "v") return `<span class="${kind === "quick" ? "w-[10px]" : "w-2"} flex shrink-0 items-center justify-center"><svg class="h-[3px] w-1" data-icon="tri"></svg></span>`;
        const on = item.endsWith("*");
        const name = item.replace("*", "");
        return `<button aria-label="${name}" class="${kinds[kind]} ${on ? "bg-[#b5e0ee]" : ""}"><svg class="${sizes[kind]} shrink-0" data-icon="${name}"></svg></button>`;
      }).join("");
    });

    document.querySelectorAll("[data-combos]").forEach((bar) => {
      bar.innerHTML = bar.dataset.combos.split(" ").map((c, i) => {
        const [icon, text, pad] = c.split(":");
        return `${i ? '<span class="ml-px mr-[2px] w-px bg-[#999]"></span>' : ""}
          <button aria-label="${icon}" class="flex size-4 items-center justify-center"><svg class="size-[14px]" data-icon="${icon}"></svg></button>
          <label class="flex w-[83px] items-center bg-[#e0e0e0] pr-1"><select aria-label="${icon}" style="padding-left:${pad}px" class="min-w-0 flex-1 appearance-none pr-1 leading-4 text-black outline-none"><option>${text}</option></select><svg class="size-2 shrink-0" data-icon="chev"></svg></label>`;
      }).join("");
    });

    document.querySelectorAll("[data-icon]").forEach((svg) => fillIcon(svg, svg.dataset.icon));
  </script>
</body>
</html>
